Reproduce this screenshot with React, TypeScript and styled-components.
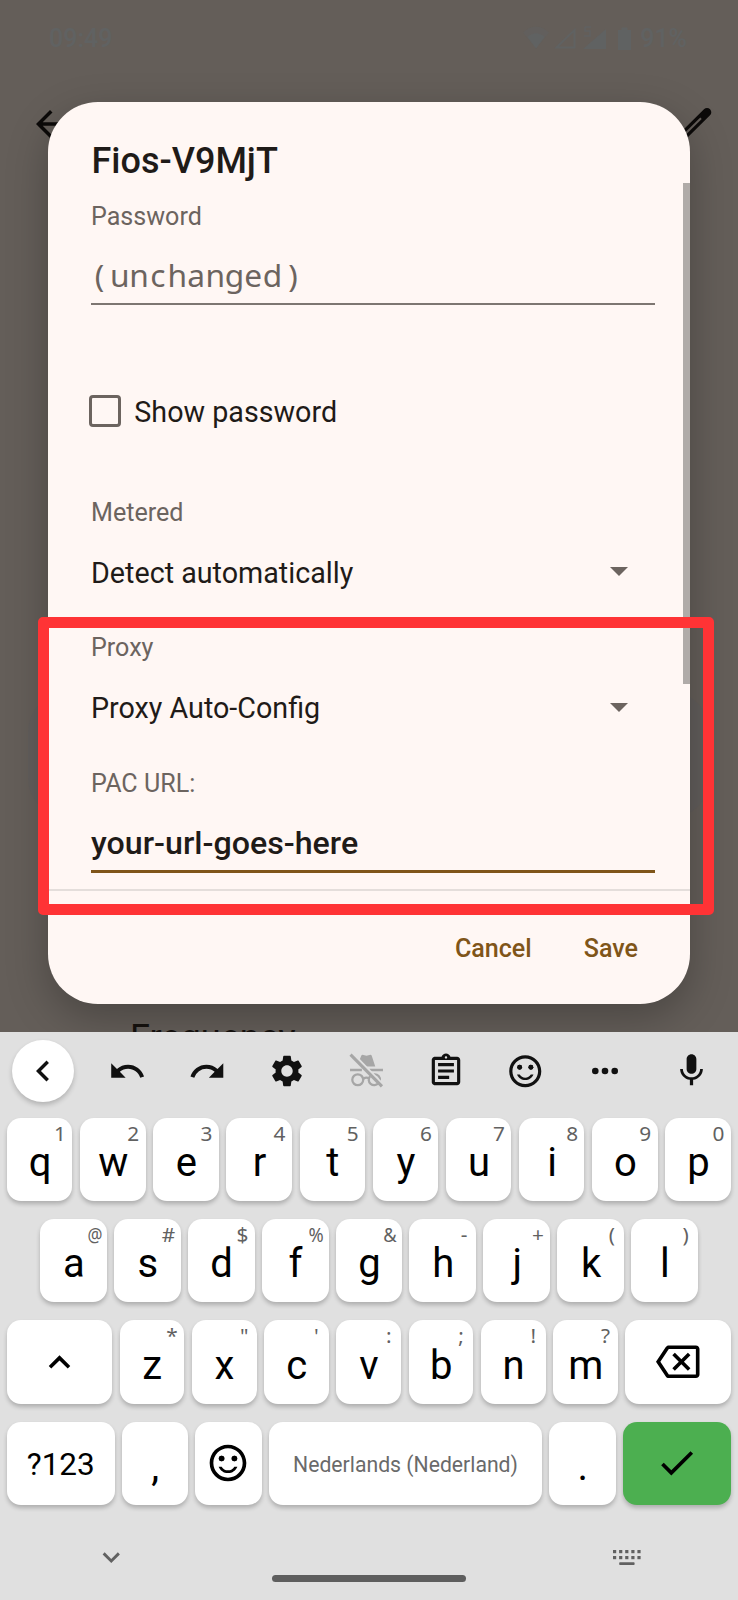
import React from "react";
import styled, { createGlobalStyle, css } from "styled-components";
import {
  MdArrowBack,
  MdCheck,
  MdChevronLeft,
  MdExpandLess,
  MdExpandMore,
  MdMic,
  MdOutlineAssignment,
  MdOutlineBackspace,
  MdRedo,
  MdSentimentSatisfiedAlt,
  MdSettings,
  MdUndo,
} from "react-icons/md";

const color = {
  scrim: "#645e59",
  surface: "#fff7f4",
  ink: "#1f1b18",
  muted: "#6c645f",
  accent: "#7f5519",
  mark: "#ff3335",
  board: "#e0e0e0",
  hint: "#616161",
  status: "#606262",
};

const GlobalStyle = createGlobalStyle`
  * { box-sizing: border-box; }
  body { margin: 0; background: ${color.board}; font-family: Roboto, "Liberation Sans", sans-serif; }
  svg { display: block; flex: none; }
`;

const Phone = styled.div`
  width: 738px;
  height: 1600px;
  display: flex;
  flex-direction: column;
  overflow: hidden;
`;

const Screen = styled.div`
  position: relative;
  height: 1032.4px;
  flex: none;
  display: flex;
  flex-direction: column;
  overflow: hidden;
  background: ${color.scrim};
`;

const StatusBar = styled.div`
  height: 76px;
  flex: none;
  display: flex;
  align-items: center;
  justify-content: space-between;
  padding: 1px 51px 0 49px;
  color: ${color.status};
  font-size: 25px;
  font-weight: 500;
`;

const StatusIcons = styled.div`
  display: flex;
  align-items: center;
  gap: 7px;
`;

const AppBar = styled.div`
  height: 96px;
  flex: none;
  display: flex;
  justify-content: space-between;
  padding: 27px 21px 0 29px;
  color: #0c0a09;
`;

const DetailCard = styled.div`
  height: 126px;
  margin: 520px 28px 0;
  flex: none;
  border-radius: 40px;
  background: #615d5b;
`;

const DetailRow = styled.div`
  margin: 197.5px 0 0 130px;
  font-size: 36px;
  line-height: 44px;
  color: #16120f;
`;

const Dialog = styled.div`
  position: absolute;
  left: 48px;
  top: 102.4px;
  width: 642px;
  height: 901.4px;
  border-radius: 50px;
  background: ${color.surface};
  box-shadow: 0 14px 42px rgba(0, 0, 0, 0.26);
  display: flex;
  flex-direction: column;
  color: ${color.ink};
`;

const Title = styled.h1`
  margin: 0;
  height: 80.6px;
  flex: none;
  padding: 36.5px 43.5px 0;
  font-size: 36px;
  line-height: 44px;
  font-weight: 500;
  white-space: nowrap;
`;

const ScrollArea = styled.div`
  position: relative;
  height: 708.4px;
  flex: none;
  display: flex;
  flex-direction: column;
  padding: 19.5px 35.5px 0 43px;
  border-bottom: 2px solid #e4dedb;
`;

const ScrollThumb = styled.div`
  position: absolute;
  right: 0;
  top: 0;
  width: 7.3px;
  height: 501.5px;
  background: #b0aba8;
`;

const Label = styled.div`
  height: 30px;
  flex: none;
  font-size: 25.1px;
  line-height: 30px;
  color: ${color.muted};
`;

const Field = styled.div<{ $focused?: boolean }>`
  display: flex;
  align-items: flex-end;
  flex: none;
  white-space: nowrap;
  ${({ $focused }) =>
    $focused
      ? css`
          height: 74.4px;
          padding-bottom: 8px;
          border-bottom: 3px solid ${color.accent};
          font-size: 32.2px;
          line-height: 37px;
          font-weight: 500;
        `
      : css`
          height: 72.8px;
          padding-bottom: 7px;
          border-bottom: 2px solid #7d7671;
          font-family: "Noto Sans", sans-serif;
          font-size: 31.7px;
          line-height: 43px;
          color: ${color.muted};
        `}
`;

const MonoCell = styled.span`
  display: inline-block;
  width: 19.1px;
  text-align: center;

  &:first-child {
    text-indent: -2px;
  }
  &:last-child {
    text-indent: 3px;
  }
`;

const CheckRow = styled.div`
  display: flex;
  align-items: center;
  height: 34px;
  flex: none;
  margin: 89px 0 69.7px;
  margin-left: -1.7px;
  gap: 13px;
  font-size: 28.7px;

  span + span {
    padding-top: 2px;
  }
`;

const CheckBox = styled.span`
  width: 32px;
  height: 32px;
  border: 3.5px solid ${color.muted};
  border-radius: 4px;
`;

const Select = styled.div`
  height: 105.4px;
  flex: none;
  display: flex;
  justify-content: space-between;
  padding: 27.8px 27px 0 0;
  font-size: 28.7px;
  line-height: 34px;

  svg {
    margin-top: 11.4px;
  }
`;

const Actions = styled.div`
  display: flex;
  justify-content: flex-end;
  gap: 52px;
  padding: 42.6px 52px 0 0;
  font-size: 25.1px;
  line-height: 30px;
  font-weight: 500;
  color: ${color.accent};
`;

const Highlight = styled.div`
  position: absolute;
  left: 38px;
  top: 617.4px;
  width: 676px;
  height: 297.2px;
  border: 11.2px solid ${color.mark};
  border-radius: 5px;
`;

const Keyboard = styled.div`
  flex: 1;
  display: flex;
  flex-direction: column;
  background: ${color.board};
  color: #000;
`;

const Toolbar = styled.div`
  height: 85.6px;
  flex: none;
  display: flex;
  padding: 7.6px 0 0 12px;
  color: #111;
`;

const CollapseButton = styled.div`
  width: 62px;
  height: 62px;
  margin-right: 13.8px;
  border-radius: 50%;
  background: #fff;
  box-shadow: 0 3px 5px rgba(0, 0, 0, 0.2);
  display: flex;
  align-items: center;
  justify-content: center;
`;

const Tool = styled.div<{ $last?: boolean }>`
  height: 62px;
  display: flex;
  align-items: center;
  justify-content: center;
  ${({ $last }) => ($last ? "flex: 1; padding-left: 1px;" : "width: 79.6px;")}
`;

const KeyRow = styled.div<{ $inset?: number; $gap: number }>`
  height: 83.3px;
  flex: none;
  display: flex;
  gap: ${({ $gap }) => $gap}px;
  padding: 0 ${({ $inset = 7.3 }) => $inset}px 0 ${({ $inset = 7 }) => $inset}px;
  margin-bottom: 17.9px;
`;

const Key = styled.div<{ $width?: number; $accent?: boolean }>`
  position: relative;
  ${({ $width }) => ($width ? `width: ${$width}px; flex: none;` : "flex: 1 1 0; min-width: 0;")}
  display: flex;
  align-items: center;
  justify-content: center;
  border-radius: 14px;
  background: ${({ $accent }) => ($accent ? "#4caf50" : "#fff")};
  box-shadow: 0 3px 4px rgba(0, 0, 0, 0.22);
`;

const Glyph = styled.span`
  font-size: 40px;
  line-height: 48px;
  padding: 7px 0 0 0.8px;
`;

const Hint = styled.span<{ $squeeze?: number }>`
  position: absolute;
  top: 1px;
  right: 2.3px;
  width: 20px;
  display: flex;
  justify-content: center;
  font-family: "Noto Sans", sans-serif;
  font-size: 20.8px;
  line-height: 29px;
  color: ${color.hint};
  transform: scaleX(${({ $squeeze = 1 }) => $squeeze});
`;

const ModeLabel = styled.span`
  font-size: 31.5px;
  padding-top: 2px;
`;

const SpaceLabel = styled.span`
  font-size: 21.2px;
  padding-top: 3px;
  color: #6a6a6a;
  white-space: nowrap;
`;

const NavBar = styled.div`
  flex: 1;
  display: flex;
  justify-content: space-between;
  padding: 0 97px 0 94px;
  color: ${color.hint};
`;

const NavSlot = styled.div<{ $top: number }>`
  padding-top: ${({ $top }) => $top}px;
`;

const HomeBar = styled.div`
  width: 194px;
  height: 7px;
  margin: 51.8px 3px 0 0;
  border-radius: 4px;
  background: #5e5e5e;
`;

const Triangle = () => (
  <svg width="18" height="9" viewBox="0 0 18 9">
    <path d="M0 0h18L9 9z" fill={color.muted} />
  </svg>
);

const SystemIcons = () => (
  <svg width="110" height="26" viewBox="0 0 110 26" fill={color.status}>
    <path d="M0 6.500C8-1.500 18-1.500 26 6.500L13 22.500z" fillOpacity=".45" />
    <path d="M4.500 11C10 6 16 6 21.500 11L13 22.500z" />
    <path d="M33.500 21.500L51.500 4v17.500z" fill="none" stroke={color.status} strokeWidth="2" />
    <path d="M60 23L83 3v20z" />
    <path d="M62 1h6M62 1v4h5v5h-6" fill="none" stroke={color.status} strokeWidth="1.500" />
    <path d="M95 4h3.500V1.500h6V4h3.500v20H95z" />
  </svg>
);

const Pencil = () => (
  <svg width="42" height="42" viewBox="0 0 42 42" fill="none">
    <path d="M5 36L32 9.300" stroke="#0c0a09" strokeWidth="8.600" strokeLinecap="round" />
    <path d="M6 35L26 15.300" stroke={color.scrim} strokeWidth="2" />
  </svg>
);

const IncognitoOff = () => (
  <svg width="35" height="35" viewBox="0 0 34 34" fill="none">
    <path d="M10.500 6L12 2.500q.5-1 2-.6l3 .7 3-.7q1.500-.4 2 .6L25.500 13H17z" fill="#a6a6a6" />
    <path d="M1 16.500h11.500M20 16.500h13" stroke="#a6a6a6" strokeWidth="2.400" />
    <circle cx="8.500" cy="26" r="5.300" stroke="#a6a6a6" strokeWidth="2.200" />
    <path d="M14 25q3-2 5.500 0M20.500 22.500a5.300 5.300 0 1 0 8 7M24 20.800a5.300 5.300 0 0 1 6 6.500" stroke="#a6a6a6" strokeWidth="2.200" />
    <path d="M3 1.500L33 32" stroke={color.board} strokeWidth="4.500" />
    <path d="M1.500 1.500L32 32.500" stroke="#a6a6a6" strokeWidth="3" />
  </svg>
);

const MoreDots = () => (
  <svg width="28" height="8" viewBox="0 0 28 8" fill="#111">
    <circle cx="4.300" cy="4" r="3.300" />
    <circle cx="14" cy="4" r="3.300" />
    <circle cx="23.700" cy="4" r="3.300" />
  </svg>
);

const KeyboardSwitch = () => (
  <svg width="28" height="16" viewBox="0 0 28 16" fill={color.hint}>
    {[0, 6.1, 12.2, 18.3, 24.4].map((x) => (
      <React.Fragment key={x}>
        <rect x={x} y="0" width="3.200" height="3.200" />
        <rect x={x} y="6" width="3.200" height="3.200" />
      </React.Fragment>
    ))}
    <rect x="6.200" y="12.300" width="15.400" height="2.800" rx=".8" />
  </svg>
);

const squeeze: Record<string, number> = { "@": 0.8, "%": 0.88, "&": 0.88 };

const topRow = [["q", "1"], ["w", "2"], ["e", "3"], ["r", "4"], ["t", "5"], ["y", "6"], ["u", "7"], ["i", "8"], ["o", "9"], ["p", "0"]];
const homeRow = [["a", "@"], ["s", "#"], ["d", "$"], ["f", "%"], ["g", "&"], ["h", "-"], ["j", "+"], ["k", "("], ["l", ")"]];
const lowerRow = [["z", "*"], ["x", '"'], ["c", "'"], ["v", ":"], ["b", ";"], ["n", "!"], ["m", "?"]];

const LetterKeys = ({ keys }: { keys: string[][] }) => (
  <>
    {keys.map(([letter, hint]) => (
      <Key key={letter}>
        <Glyph>{letter}</Glyph>
        <Hint $squeeze={squeeze[hint]}>{hint}</Hint>
      </Key>
    ))}
  </>
);

export default function App() {
  return (
    <Phone>
      <GlobalStyle />
      <Screen>
        <StatusBar>
          <span>09:49</span>
          <StatusIcons>
            <SystemIcons />
            <span>91%</span>
          </StatusIcons>
        </StatusBar>
        <AppBar>
          <MdArrowBack size={42} />
          <Pencil />
        </AppBar>
        <DetailCard />
        <DetailRow>Frequency</DetailRow>

        <Dialog>
          <Title>Fios-V9MjT</Title>
          <ScrollArea>
            <Label>Password</Label>
            <Field>
              {[..."(unchanged)"].map((ch, i) => (
                <MonoCell key={i}>{ch}</MonoCell>
              ))}
            </Field>
            <CheckRow>
              <CheckBox />
              <span>Show password</span>
            </CheckRow>
            <Label>Metered</Label>
            <Select>
              Detect automatically
              <Triangle />
            </Select>
            <Label>Proxy</Label>
            <Select>
              Proxy Auto-Config
              <Triangle />
            </Select>
            <Label>PAC URL:</Label>
            <Field $focused>your-url-goes-here</Field>
            <ScrollThumb />
          </ScrollArea>
          <Actions>
            <span>Cancel</span>
            <span>Save</span>
          </Actions>
        </Dialog>
        <Highlight />
      </Screen>

      <Keyboard>
        <Toolbar>
          <CollapseButton>
            <MdChevronLeft size={42} />
          </CollapseButton>
          <Tool><MdUndo size={38.5} /></Tool>
          <Tool><MdRedo size={38.5} /></Tool>
          <Tool><MdSettings size={38} /></Tool>
          <Tool><IncognitoOff /></Tool>
          <Tool><MdOutlineAssignment size={38} /></Tool>
          <Tool><MdSentimentSatisfiedAlt size={38.5} /></Tool>
          <Tool><MoreDots /></Tool>
          <Tool $last><MdMic size={39} /></Tool>
        </Toolbar>
        <KeyRow $gap={7.8}>
          <LetterKeys keys={topRow} />
        </KeyRow>
        <KeyRow $gap={7} $inset={40}>
          <LetterKeys keys={homeRow} />
        </KeyRow>
        <KeyRow $gap={7.5}>
          <Key $width={105}><MdExpandLess size={43} /></Key>
          <LetterKeys keys={lowerRow} />
          <Key $width={105.5}><MdOutlineBackspace size={43.5} /></Key>
        </KeyRow>
        <KeyRow $gap={7.2}>
          <Key $width={107.5}><ModeLabel>?123</ModeLabel></Key>
          <Key $width={66}><Glyph>,</Glyph></Key>
          <Key $width={67}><MdSentimentSatisfiedAlt size={44} /></Key>
          <Key><SpaceLabel>Nederlands (Nederland)</SpaceLabel></Key>
          <Key $width={66.6}><Glyph>.</Glyph></Key>
          <Key $width={107.8} $accent><MdCheck size={43.5} /></Key>
        </KeyRow>
        <NavBar>
          <NavSlot $top={17.5}><MdExpandMore size={34.5} /></NavSlot>
          <HomeBar />
          <NavSlot $top={27}><KeyboardSwitch /></NavSlot>
        </NavBar>
      </Keyboard>
    </Phone>
  );
}
